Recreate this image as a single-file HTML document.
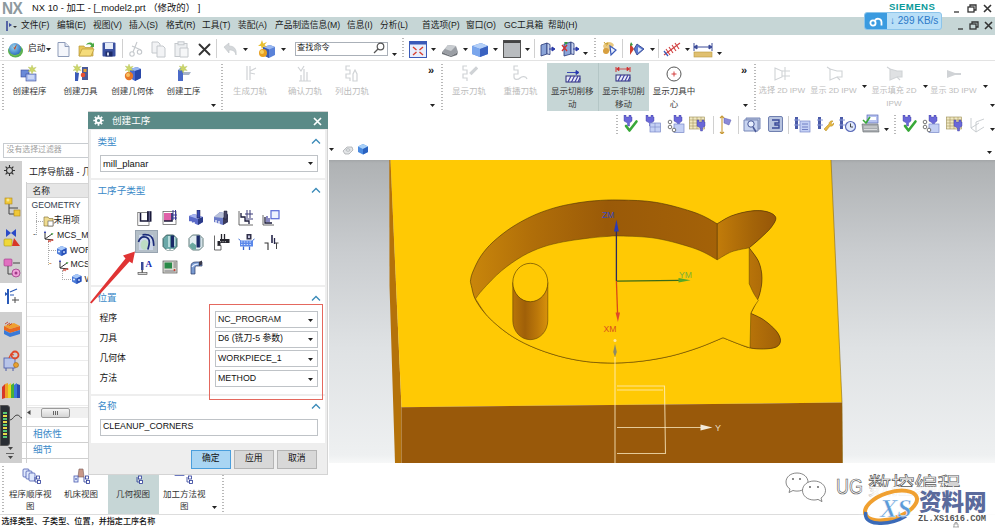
<!DOCTYPE html>
<html lang="zh"><head><meta charset="utf-8"><title>NX 10 - 加工</title>
<style>
*{box-sizing:border-box;margin:0;padding:0}
html,body{width:995px;height:531px;overflow:hidden;background:#fff}
body{font-family:"Liberation Sans","Noto Sans CJK SC",sans-serif;font-size:8.8px;color:#222;position:relative;line-height:1}
.abs{position:absolute}
.t{position:absolute;white-space:nowrap}
.grip{width:2px;background-image:repeating-linear-gradient(#b8b8b8 0 1px,transparent 1px 3px)}
#title{left:0;top:0;width:995px;height:17px;background:#fff}
#menu{left:0;top:17px;width:995px;height:18px;background:#c6d6d6}
#menu .t{top:4px;font-size:8.7px;color:#1a1a1a}
#tb1{left:0;top:35px;width:995px;height:26px;background:#fff;border-bottom:1px solid #e3e3e3}
#ribbon{left:0;top:61px;width:995px;height:52px;background:#fff;border-bottom:1px solid #e3e3e3}
#ribbon .t{font-size:8.7px}
#ribbon .dis{color:#b9b9b9}
#tb2{left:0;top:112px;width:995px;height:26px;background:#fff}
#filter{left:0;top:138px;width:995px;height:22px;background:#fff}
#leftbar{left:0;top:161px;width:22px;height:302px;background:#cfcfcf}
#nav{left:22px;top:161px;width:70px;height:302px;background:#fff;overflow:hidden}
#viewport{left:328.500px;top:160px;width:666.500px;height:304px;background:linear-gradient(#a3a6a8 0,#afb2b4 1%,#c9cccf 30%,#dfe2e4 62%,#eef0f1 97%,#f8f9f9 100%)}
#bottom{left:0;top:463px;width:995px;height:52px;background:#fff;border-bottom:1px solid #ddd}
#status{left:0;top:515px;width:995px;height:16px;background:#fff}
#dialog{left:88px;top:111px;width:240px;height:364px;background:#eeeeee;border:1px solid #d4d4d4}

</style></head><body>
<div id="title" class="abs">
<div class="t" style="left:2px;top:0px;font-size:16.5px;font-weight:bold;color:#8d999e;letter-spacing:-0.5px;transform:scaleX(0.93);transform-origin:0 0">NX</div>
<div class="t" style="left:32px;top:3px;font-size:9.400px;color:#111">NX 10 - 加工 - [_model2.prt （修改的） ]</div>
<div class="t" style="left:889px;top:2px;font-size:9.600px;font-weight:bold;color:#0a9a9a;letter-spacing:0.450px">SIEMENS</div>
<svg class="abs" style="left:950px;top:2px" width="45" height="14" viewBox="0 0 45 14"><g fill="none" stroke="#333" stroke-width="1.3"><path d="M4 10h5"/><rect x="18" y="5" width="6" height="5"/><path d="M20 5V3h6v5h-2"/><path d="M34 3l7 7M41 3l-7 7" stroke-width="1.6"/></g></svg>
</div>
<div id="menu" class="abs">
<svg class="abs" style="left:4px;top:3px" width="14" height="12" viewBox="0 0 14 12"><path d="M3 1v10" stroke="#3a4a9a" stroke-width="1.6"/><path d="M5 3l3 2-3 2z" fill="#3a4a9a"/><path d="M9 6l2 2 2-2z" fill="#333"/></svg>
<div class="t" style="left:21px;top:4px;">文件(F)</div>
<div class="t" style="left:57px;top:4px;">编辑(E)</div>
<div class="t" style="left:93px;top:4px;">视图(V)</div>
<div class="t" style="left:129px;top:4px;">插入(S)</div>
<div class="t" style="left:166px;top:4px;">格式(R)</div>
<div class="t" style="left:202px;top:4px;">工具(T)</div>
<div class="t" style="left:238px;top:4px;">装配(A)</div>
<div class="t" style="left:275px;top:4px;">产品制造信息(M)</div>
<div class="t" style="left:347px;top:4px;">信息(I)</div>
<div class="t" style="left:380px;top:4px;">分析(L)</div>
<div class="t" style="left:422px;top:4px;">首选项(P)</div>
<div class="t" style="left:466px;top:4px;">窗口(O)</div>
<div class="t" style="left:504px;top:4px;">GC工具箱</div>
<div class="t" style="left:548px;top:4px;">帮助(H)</div>
<svg class="abs" style="left:950px;top:2px" width="45" height="14" viewBox="0 0 45 14"><g fill="none" stroke="#333" stroke-width="1.3"><path d="M8 10h5"/><rect x="20" y="5" width="6" height="5"/><path d="M22 5V3h6v5h-2"/><path d="M35 3l7 7M42 3l-7 7" stroke-width="1.6"/></g></svg>
<div class="abs" style="left:864px;top:-5px;width:78px;height:18px;border-radius:3px;background:#b9dff7;border:1px solid #8cc4ea;overflow:hidden">
<div class="abs" style="left:0;top:0;width:22px;height:18px;background:#3b9be0"></div>
<svg class="abs" style="left:3px;top:2px" width="16" height="13" viewBox="0 0 16 13"><g fill="none" stroke="#fff" stroke-width="1.8"><circle cx="5" cy="8" r="2.6"/><path d="M7 5.5a3.5 3.5 0 0 1 6.5 1.5v3.5"/></g></svg>
<div class="t" style="left:25px;top:3px;font-size:10px;color:#2a78c8">&#8595; 299 KB/s</div>
</div>
</div>
<div id="tb1" class="abs">
<div class="abs grip" style="left:2px;top:3px;height:21px"></div>
<svg class="abs" style="left:7px;top:6px" width="17" height="17" viewBox="0 0 17 17"><defs><radialGradient id="gl" cx="0.4" cy="0.35" r="0.7"><stop offset="0" stop-color="#9ad8f0"/><stop offset="1" stop-color="#2a6ac0"/></radialGradient></defs><ellipse cx="8.5" cy="10" rx="7.5" ry="6.5" fill="#5ab050"/><circle cx="8" cy="8" r="6" fill="url(#gl)"/><path d="M4 3l3 4 3-4-2 6z" fill="#c04a28"/><path d="M3 12c3 3 9 3 12-2-2 5-9 7-12 2z" fill="#7cc060"/></svg>
<div class="t" style="left:28px;top:8.5px;font-size:8.7px">启动</div>
<svg class="abs" style="left:45.5px;top:13px" width="5" height="3" viewBox="0 0 5 3"><path d="M0 0h5L2.5 3z" fill="#222"/></svg>
<svg class="abs" style="left:57px;top:7px" width="13" height="15" viewBox="0 0 13 15"><path d="M1 .5h7l4 4v10H1z" fill="#f4f6fb" stroke="#8d9bb8"/><path d="M8 .5v4h4" fill="#dfe5f2" stroke="#8d9bb8"/></svg>
<svg class="abs" style="left:78px;top:6px" width="17" height="16" viewBox="0 0 17 16"><path d="M1 5h5l1 1.5h8V15H1z" fill="#e8c75a" stroke="#b89a3a" stroke-width=".7"/><path d="M1 15l3-7h12l-3 7z" fill="#f5dc7a" stroke="#b89a3a" stroke-width=".7"/><path d="M8 4c2-3 5-3 7-1l1-1.5V6h-4l1.3-1.3C12 3 10 3 8 4z" fill="#4aa844"/></svg>
<svg class="abs" style="left:102px;top:7px" width="14" height="15" viewBox="0 0 14 15"><rect x=".5" y=".5" width="13" height="14" rx="1" fill="#3a50a0"/><rect x="3" y="1" width="8" height="6" fill="#e6ecf8"/><rect x="3.5" y="9.5" width="7" height="5" fill="#1e2c68"/><rect x="5" y="10.5" width="2" height="3" fill="#d0d8f0"/></svg>
<div class="abs" style="left:122px;top:4px;width:1px;height:19px;background:#d0d0d0"></div>
<svg class="abs" style="left:128px;top:6px" width="15" height="17" viewBox="0 0 15 17"><g fill="none" stroke="#c4c8cc" stroke-width="1.1"><path d="M9 1L5 11M4 5l9 4"/><circle cx="4" cy="13" r="2.2"/><circle cx="11.5" cy="11" r="2.2"/></g></svg>
<svg class="abs" style="left:151px;top:6px" width="15" height="17" viewBox="0 0 15 17"><g fill="#f2f3f5" stroke="#c4c8cc" stroke-width="1"><path d="M1 1h6l2 2v9H1z"/><path d="M6 5h6l2 2v9H6z"/></g></svg>
<svg class="abs" style="left:174px;top:6px" width="15" height="17" viewBox="0 0 15 17"><g fill="#eef0f2" stroke="#c4c8cc" stroke-width="1"><rect x="1" y="2.5" width="12" height="13"/><rect x="4" y=".8" width="6" height="3"/><path d="M6 7h8v9H6z" fill="#f6f7f8"/></g></svg>
<svg class="abs" style="left:198px;top:8px" width="13" height="13" viewBox="0 0 13 13"><path d="M1.5 1.5l10 10M11.5 1.5l-10 10" stroke="#333" stroke-width="1.9" stroke-linecap="round"/></svg>
<div class="abs" style="left:216px;top:4px;width:1px;height:19px;background:#d0d0d0"></div>
<svg class="abs" style="left:223px;top:7px" width="15" height="14" viewBox="0 0 15 14"><path d="M1 5l5-4v3c5 0 8 3 7 9-1-4-3-5-7-5v3z" fill="#d4d7da" stroke="#c0c4c8" stroke-width=".6"/></svg>
<svg class="abs" style="left:242.5px;top:13px" width="5" height="3" viewBox="0 0 5 3"><path d="M0 0h5L2.5 3z" fill="#222"/></svg>
<svg class="abs" style="left:257px;top:5px" width="19" height="19" viewBox="0 0 19 19"><path d="M6 7l7-2 5 2v8l-6 3-6-3z" fill="#5a82d8"/><path d="M6 7l6 2.5 6-2.5-5-2z" fill="#9ab8f0"/><path d="M12 9.5V18l-6-3V7z" fill="#3a5cb0"/><circle cx="6" cy="13" r="4" fill="#e8a020"/><circle cx="5" cy="12" r="2" fill="#f8d060"/><path d="M5 0l1.2 3.5L10 2 7.5 5 10 7 6.5 6.5 5 9 4 6 1 6l2.5-2z" fill="#e8c030"/></svg>
<svg class="abs" style="left:280.5px;top:13px" width="5" height="3" viewBox="0 0 5 3"><path d="M0 0h5L2.5 3z" fill="#222"/></svg>
<div class="abs" style="left:294.5px;top:6.5px;width:93px;height:14px;border:1px solid #aab0b8;background:#fff"></div><div class="t" style="left:297px;top:9px;font-size:8.200px;color:#222">查找命令</div>
<svg class="abs" style="left:373px;top:7px" width="12" height="12" viewBox="0 0 12 12"><g fill="none" stroke="#555" stroke-width="1.2"><circle cx="7.5" cy="4.5" r="3.3"/><path d="M5 7L1 11"/></g></svg>
<svg class="abs" style="left:391.5px;top:17.5px" width="5" height="3" viewBox="0 0 5 3"><path d="M0 0h5L2.5 3z" fill="#222"/></svg>
<div class="abs grip" style="left:402px;top:3px;height:21px"></div>
<svg class="abs" style="left:409px;top:6px" width="18" height="17" viewBox="0 0 18 17"><rect x=".5" y=".5" width="17" height="16" fill="#e8eefc" stroke="#3a5ab8"/><rect x=".5" y=".5" width="17" height="3" fill="#3a5ab8"/><g stroke="#d84030" stroke-width="1.4"><path d="M4 6l3.5 3M14 6l-3.5 3M4 14l3.5-3M14 14l-3.5-3"/></g></svg>
<svg class="abs" style="left:431px;top:13px" width="5" height="3" viewBox="0 0 5 3"><path d="M0 0h5L2.5 3z" fill="#222"/></svg>
<svg class="abs" style="left:441px;top:7px" width="18" height="15" viewBox="0 0 18 15"><path d="M1 10l6-7 8 1 2 6-7 4z" fill="#9a9ea4"/><path d="M1 10l9 4 7-4-1 3-6 2-9-3z" fill="#6e7278"/><path d="M7 3l8 1-5 5-6-2z" fill="#c8ccd0"/></svg>
<svg class="abs" style="left:462.5px;top:13px" width="5" height="3" viewBox="0 0 5 3"><path d="M0 0h5L2.5 3z" fill="#222"/></svg>
<svg class="abs" style="left:471px;top:6px" width="18" height="17" viewBox="0 0 18 17"><path d="M1 5l9-3 7 3v8l-8 3-8-3z" fill="#5a8ae0"/><path d="M1 5l8 3 8-3-7-3z" fill="#b4d0f8"/><path d="M9 8v8l-8-3V5z" fill="#7aa6ec"/><path d="M9 8v8l8-3V5z" fill="#3a62c0"/></svg>
<svg class="abs" style="left:492.5px;top:13px" width="5" height="3" viewBox="0 0 5 3"><path d="M0 0h5L2.5 3z" fill="#222"/></svg>
<svg class="abs" style="left:502.5px;top:5px" width="18" height="18" viewBox="0 0 18 18"><rect x=".5" y=".5" width="17" height="17" fill="#b9bcbf" stroke="#555"/><rect x=".5" y=".5" width="17" height="2.5" fill="#444"/></svg>
<svg class="abs" style="left:525px;top:13px" width="5" height="3" viewBox="0 0 5 3"><path d="M0 0h5L2.5 3z" fill="#222"/></svg>
<div class="abs" style="left:534px;top:4px;width:1px;height:19px;background:#d0d0d0"></div>
<svg class="abs" style="left:540px;top:6px" width="16" height="16" viewBox="0 0 16 16"><path d="M1 4l6-2v11l-6 2z" fill="#8aa4d8" stroke="#2a3a78" stroke-width=".8"/><path d="M7 2l3 1.5v10L7 13z" fill="#c8d4f0" stroke="#2a3a78" stroke-width=".8"/><path d="M9 8h5M12 6l3 2-3 2z" stroke="#2a3aa8" fill="#2a3aa8"/></svg>
<svg class="abs" style="left:560px;top:5px" width="20" height="18" viewBox="0 0 20 18"><path d="M4 4l7-2v12l-7 2z" fill="#8aa4d8" stroke="#2a3a78" stroke-width=".8"/><path d="M11 2l3 1.5v11L11 14z" fill="#c8d4f0" stroke="#2a3a78" stroke-width=".8"/><path d="M2 5l5 6M7 5l-5 6" stroke="#d03030" stroke-width="1.4"/><path d="M4 2l2 3 2-3z" fill="#30a040"/><path d="M13 9h4M16 7l3 2-3 2z" stroke="#2a3aa8" fill="#2a3aa8"/></svg>
<svg class="abs" style="left:583px;top:16.5px" width="5" height="3" viewBox="0 0 5 3"><path d="M0 0h5L2.5 3z" fill="#222"/></svg>
<div class="abs grip" style="left:594px;top:3px;height:21px"></div>
<svg class="abs" style="left:600px;top:5px" width="19" height="19" viewBox="0 0 19 19"><path d="M3 6c2-5 9-5 11-1l-3 5-5 4z" fill="#e8c880"/><circle cx="6" cy="11" r="3" fill="#d8a040"/><path d="M10 6l6 4-5 5z" fill="#e8eefc" stroke="#3a5ab8" stroke-width="1.2"/><path d="M4 2l1.5 2L8 3 6.5 5.5" stroke="#c8a030" fill="none"/></svg>
<div class="abs" style="left:622px;top:4px;width:1px;height:19px;background:#d0d0d0"></div>
<svg class="abs" style="left:628px;top:6px" width="20" height="16" viewBox="0 0 20 16"><path d="M2 2l4 6-4 6z" fill="#d04030"/><path d="M3 1l2 3-3 1z" fill="#30a040"/><path d="M9 3l7 5-7 6-3-6z" fill="#5a7ad0" stroke="#2a3a88" stroke-width=".8"/><path d="M10 6l4 2.5-4 3z" fill="#dfe8fc"/></svg>
<svg class="abs" style="left:649.5px;top:13px" width="5" height="3" viewBox="0 0 5 3"><path d="M0 0h5L2.5 3z" fill="#222"/></svg>
<div class="abs" style="left:658px;top:4px;width:1px;height:19px;background:#d0d0d0"></div>
<svg class="abs" style="left:663px;top:5px" width="19" height="19" viewBox="0 0 19 19"><g stroke="#d04040" stroke-width="1.1"><path d="M1 15L17 3"/><path d="M3 9l4 6M6 7l4 6M9 5l4 6M12 3l4 6"/></g><path d="M1 11l4 5" stroke="#3a5ab8" stroke-width="1.3"/></svg>
<svg class="abs" style="left:684.5px;top:13px" width="5" height="3" viewBox="0 0 5 3"><path d="M0 0h5L2.5 3z" fill="#222"/></svg>
<svg class="abs" style="left:693px;top:7px" width="20" height="16" viewBox="0 0 20 16"><g stroke="#3a4a98" stroke-width="1"><path d="M1 1v8M19 1v8M1 5h18"/><path d="M1 5l3-2v4zM19 5l-3-2v4z" fill="#3a4a98"/></g><rect x="1" y="10" width="18" height="5" fill="#e0c070" stroke="#b89840" stroke-width=".6"/></svg>
<svg class="abs" style="left:716.5px;top:16.5px" width="5" height="3" viewBox="0 0 5 3"><path d="M0 0h5L2.5 3z" fill="#222"/></svg>
</div>
<div id="ribbon" class="abs">
<div class="abs grip" style="left:2px;top:3px;height:46px"></div>
<svg class="abs" style="left:20px;top:4px" width="18" height="17" viewBox="0 0 18 17"><rect x="1" y="5" width="8" height="7" fill="#6a8ad8" stroke="#3a4a98" stroke-width=".6"/><rect x="6" y="9" width="10" height="7" fill="#a8bcf0" stroke="#3a4a98" stroke-width=".6"/><path d="M8 11h6M8 13h6" stroke="#fff" stroke-width=".8"/><path d="M12 0l1.2 3 3-.8-2 2.4 2 2-3-.4-1.2 2.8-1-2.8-3 .2 2.2-2-2-2.4 2.8.8z" fill="#ccd668" stroke="#a8b848" stroke-width=".3"/></svg>
<div class="t" style="left:29.5px;top:26px;width:80px;margin-left:-40px;text-align:center;color:#3a3a3a;font-size:8.500px">创建程序</div>
<svg class="abs" style="left:72px;top:3px" width="18" height="18" viewBox="0 0 18 18"><rect x="10" y="3" width="6" height="13" fill="#4a5a98"/><rect x="11.5" y="5" width="3" height="3" fill="#e8a030"/><path d="M3 8l4 1-1 8H3z" fill="#3a5ab8"/><circle cx="11" cy="11" r="2.3" fill="#e85030"/><path d="M5 0l1.2 3 3-.8-2 2.4 2 2-3-.4-1.2 2.8-1-2.8-3 .2 2.2-2-2-2.4 2.8.8z" fill="#ccd668" stroke="#a8b848" stroke-width=".3"/></svg>
<div class="t" style="left:80.5px;top:26px;width:80px;margin-left:-40px;text-align:center;color:#3a3a3a;font-size:8.500px">创建刀具</div>
<svg class="abs" style="left:123px;top:3px" width="19" height="18" viewBox="0 0 19 18"><path d="M7 5l7-2 4 2v9l-6 3-5-3z" fill="#4a6ad0"/><path d="M7 5l5 2 6-2-4-2z" fill="#9ab8f0"/><path d="M12 7v10l6-3V5z" fill="#2a48a8"/><circle cx="6" cy="12" r="4.2" fill="#e87828"/><circle cx="5" cy="11" r="2" fill="#f8c060"/><path d="M6 0l1.2 3 3-.8-2 2.4 2 2-3-.4-1.2 2.8-1-2.8-3 .2 2.2-2-2-2.4 2.8.8z" fill="#ccd668" stroke="#a8b848" stroke-width=".3"/></svg>
<div class="t" style="left:132.5px;top:26px;width:80px;margin-left:-40px;text-align:center;color:#3a3a3a;font-size:8.500px">创建几何体</div>
<svg class="abs" style="left:175px;top:3px" width="18" height="18" viewBox="0 0 18 18"><rect x="3" y="6" width="5" height="11" fill="#4a6ac8"/><path d="M8 8h8l-2 3H8z" fill="#a8b4c8"/><path d="M3 6l2-2h3v2z" fill="#8aa4e0"/><path d="M8 0l1.2 3 3-.8-2 2.4 2 2-3-.4-1.2 2.8-1-2.8-3 .2 2.2-2-2-2.4 2.8.8z" fill="#ccd668" stroke="#a8b848" stroke-width=".3"/></svg>
<div class="t" style="left:183.5px;top:26px;width:80px;margin-left:-40px;text-align:center;color:#3a3a3a;font-size:8.500px">创建工序</div>
<svg class="abs" style="left:211px;top:42.5px" width="5" height="3" viewBox="0 0 5 3"><path d="M0 0h5L2.5 3z" fill="#222"/></svg>
<div class="abs grip" style="left:221px;top:3px;height:46px"></div>
<svg class="abs" style="left:243px;top:4px" width="15" height="17" viewBox="0 0 15 17"><g stroke="#d0d3d6" fill="none" stroke-width="1.2"><path d="M4 1v14M7 1v14"/><path d="M7 6l6-3M7 8l5 1"/></g></svg>
<div class="t" style="left:250px;top:26px;width:80px;margin-left:-40px;text-align:center;color:#bcbcbc;font-size:8.500px">生成刀轨</div>
<svg class="abs" style="left:296px;top:4px" width="18" height="17" viewBox="0 0 18 17"><g stroke="#d0d3d6" fill="none" stroke-width="1.2"><path d="M2 2l3 4 3-5"/><path d="M8 4v12M11 7v9M5 10v6M3 16h12"/></g></svg>
<div class="t" style="left:305px;top:26px;width:80px;margin-left:-40px;text-align:center;color:#bcbcbc;font-size:8.500px">确认刀轨</div>
<svg class="abs" style="left:344px;top:4px" width="17" height="17" viewBox="0 0 17 17"><g stroke="#d0d3d6" fill="none" stroke-width="1.2"><path d="M6 1H2v4h4v4H2v4h4v3"/><path d="M9 16V9l2-4 2 4v7z"/></g></svg>
<div class="t" style="left:352px;top:26px;width:80px;margin-left:-40px;text-align:center;color:#bcbcbc;font-size:8.500px">列出刀轨</div>
<div class="t" style="left:428px;top:4px;font-size:11px;font-weight:bold;color:#222">»</div>
<svg class="abs" style="left:429.5px;top:42.5px" width="5" height="3" viewBox="0 0 5 3"><path d="M0 0h5L2.5 3z" fill="#222"/></svg>
<div class="abs grip" style="left:441px;top:3px;height:46px"></div>
<svg class="abs" style="left:461px;top:4px" width="17" height="17" viewBox="0 0 17 17"><g stroke="#d0d3d6" fill="none" stroke-width="1.2"><path d="M6 1H2v4h4v4H2v4h4v3"/><path d="M9 8l6-6 1.5 1.5-6 6z" fill="#d0d3d6"/></g></svg>
<div class="t" style="left:469px;top:26px;width:80px;margin-left:-40px;text-align:center;color:#bcbcbc;font-size:8.500px">显示刀轨</div>
<svg class="abs" style="left:512px;top:4px" width="17" height="17" viewBox="0 0 17 17"><g stroke="#d0d3d6" fill="none" stroke-width="1.2"><path d="M6 1H2v4h4v4H2v3c0 3 4 3 6 1s6-2 7 1"/></g></svg>
<div class="t" style="left:520.5px;top:26px;width:80px;margin-left:-40px;text-align:center;color:#bcbcbc;font-size:8.500px">重播刀轨</div>
<div class="abs" style="left:546.5px;top:2px;width:102.5px;height:48px;background:#c6d6d6"></div><div class="abs" style="left:598px;top:2px;width:1px;height:48px;background:#b4c6c6"></div>
<svg class="abs" style="left:565px;top:9px" width="16" height="13" viewBox="0 0 16 13"><path d="M2 2.5h11M11 .5l3 2-3 2z" stroke="#2a3ab0" fill="#2a3ab0" stroke-width=".9"/><rect x="1" y="6" width="14" height="6" fill="#e8eaf8" stroke="#2a2a78" stroke-width="1"/><path d="M3 12l3-6M6.5 12l3-6M10 12l3-6M13 12l2-4" stroke="#3a3aa0" stroke-width="1.1"/></svg>
<div class="t" style="left:572.3px;top:26px;width:80px;margin-left:-40px;text-align:center;color:#3a3a3a;font-size:8.500px">显示切削移</div>
<div class="t" style="left:572.3px;top:38.5px;width:80px;margin-left:-40px;text-align:center;color:#3a3a3a;font-size:8.500px">动</div>
<svg class="abs" style="left:615px;top:5px" width="16" height="17" viewBox="0 0 16 17"><path d="M1 1v5M15 1v5" stroke="#d03030" stroke-width="1"/><path d="M2 3h12M4 1.2L1.5 3 4 4.8zM12 1.2L14.5 3 12 4.8z" stroke="#d03030" fill="#d03030" stroke-width=".8"/><rect x="1" y="9" width="14" height="6" fill="#e8eaf8" stroke="#2a2a78" stroke-width="1"/><path d="M3 15l3-6M6.5 15l3-6M10 15l3-6M13 15l2-4" stroke="#3a3aa0" stroke-width="1.1"/></svg>
<div class="t" style="left:623.5px;top:26px;width:80px;margin-left:-40px;text-align:center;color:#3a3a3a;font-size:8.500px">显示非切削</div>
<div class="t" style="left:623.5px;top:38.5px;width:80px;margin-left:-40px;text-align:center;color:#3a3a3a;font-size:8.500px">移动</div>
<svg class="abs" style="left:666px;top:5px" width="16" height="16" viewBox="0 0 16 16"><circle cx="8" cy="8" r="7" fill="#fff" stroke="#444" stroke-width=".9"/><path d="M8 5.5v5M5.5 8h5" stroke="#d03030" stroke-width=".9"/></svg>
<div class="t" style="left:674px;top:26px;width:80px;margin-left:-40px;text-align:center;color:#3a3a3a;font-size:8.500px">显示刀具中</div>
<div class="t" style="left:674px;top:38.5px;width:80px;margin-left:-40px;text-align:center;color:#3a3a3a;font-size:8.500px">心</div>
<div class="t" style="left:741px;top:4px;font-size:11px;font-weight:bold;color:#222">»</div>
<svg class="abs" style="left:742.5px;top:42.5px" width="5" height="3" viewBox="0 0 5 3"><path d="M0 0h5L2.5 3z" fill="#222"/></svg>
<div class="abs grip" style="left:754px;top:3px;height:46px"></div>
<svg class="abs" style="left:774px;top:5px" width="18" height="15" viewBox="0 0 18 15"><g stroke="#d0d3d6" fill="none" stroke-width="1.1"><path d="M1 2l7 3v6l-7 3z"/><path d="M11 1v13M8 5h8M8 10h8"/></g></svg>
<div class="t" style="left:782px;top:26px;width:80px;margin-left:-40px;text-align:center;color:#bcbcbc;font-size:8.100px">选择 2D IPW</div>
<svg class="abs" style="left:826px;top:5px" width="18" height="15" viewBox="0 0 18 15"><g stroke="#d0d3d6" fill="none" stroke-width="1.1"><path d="M4 3l7 2h5v6h-5l-7 3z"/><path d="M1 1l3 2M11 11l3 3"/></g></svg>
<div class="t" style="left:833.5px;top:26px;width:80px;margin-left:-40px;text-align:center;color:#bcbcbc;font-size:8.100px">显示 2D IPW</div>
<svg class="abs" style="left:861.5px;top:24px" width="5" height="3" viewBox="0 0 5 3"><path d="M0 0h5L2.5 3z" fill="#222"/></svg>
<svg class="abs" style="left:886px;top:5px" width="18" height="15" viewBox="0 0 18 15"><g stroke="#d0d3d6" fill="#dfe1e3" stroke-width="1.1"><path d="M4 3l7 2h5v6h-5l-7 3z"/><path d="M1 1l3 2M11 11l3 3" fill="none"/></g></svg>
<div class="t" style="left:894px;top:26px;width:80px;margin-left:-40px;text-align:center;color:#bcbcbc;font-size:8.100px">显示填充 2D</div>
<div class="t" style="left:894px;top:38.5px;width:80px;margin-left:-40px;text-align:center;color:#bcbcbc;font-size:8.100px">IPW</div>
<svg class="abs" style="left:922.5px;top:24px" width="5" height="3" viewBox="0 0 5 3"><path d="M0 0h5L2.5 3z" fill="#222"/></svg>
<svg class="abs" style="left:946px;top:6px" width="16" height="13" viewBox="0 0 16 13"><path d="M1 3l8 3h6v2H9l-8 3z" fill="#d0d3d6"/></svg>
<div class="t" style="left:953.5px;top:26px;width:80px;margin-left:-40px;text-align:center;color:#bcbcbc;font-size:8.100px">显示 3D IPW</div>
<svg class="abs" style="left:982.5px;top:24px" width="5" height="3" viewBox="0 0 5 3"><path d="M0 0h5L2.5 3z" fill="#222"/></svg>
<svg class="abs" style="left:989.5px;top:42.5px" width="5" height="3" viewBox="0 0 5 3"><path d="M0 0h5L2.5 3z" fill="#222"/></svg>
</div>
<div id="tb2" class="abs">
<div class="abs grip" style="left:616px;top:3px;height:20px"></div>
<svg class="abs" style="left:621px;top:3px" width="18" height="18" viewBox="0 0 18 18"><path d="M3 0h2v2h3v-2h2v2h1v4l-2.5 2v3h-2v-3L3 6v-4z" fill="#6a68d8" stroke="#3a3aa0" stroke-width=".4"/><path d="M5 11l3.5 4.5 7-9" fill="none" stroke="#38a838" stroke-width="2.6" stroke-linecap="round" stroke-linejoin="round"/></svg>
<svg class="abs" style="left:645px;top:3px" width="17" height="18" viewBox="0 0 17 18"><path d="M1 0h2v2h3v-2h2v2h1v4l-2.5 2v3h-2v-3L1 6v-4z" fill="#6a68d8" stroke="#3a3aa0" stroke-width=".4"/><rect x="5" y="8" width="10.5" height="9" fill="#c4d0f4" stroke="#7888c8" stroke-width=".7"/><path d="M5 12h10.5M10 8v9" stroke="#7888c8" stroke-width=".6"/></svg>
<svg class="abs" style="left:667px;top:3px" width="18" height="18" viewBox="0 0 18 18"><path d="M7 0h2v2h3v-2h2v2h1v4l-2.5 2v3h-2v-3L7 6v-4z" fill="#6a68d8" stroke="#3a3aa0" stroke-width=".4"/><rect x="7" y="9" width="10" height="8.5" fill="#c4d0f4" stroke="#7888c8" stroke-width=".7"/><g fill="#fff" stroke="#555" stroke-width=".8"><circle cx="3" cy="7" r="1.8"/><circle cx="3" cy="12" r="1.8"/><circle cx="7" cy="15" r="1.8"/></g></svg>
<svg class="abs" style="left:689px;top:3px" width="18" height="19" viewBox="0 0 18 19"><rect x=".5" y="2" width="15" height="12" fill="#f0e8c0" stroke="#9a8a50" stroke-width=".6"/><path d="M.5 5h15M.5 8h15M.5 11h15M4 2v12M8 2v12M12 2v12" stroke="#9a8a50" stroke-width=".5"/><path d="M8 5h2v2h3v-2h2v2h1v4l-2.5 2v3h-2v-3L8 11v-4z" fill="#6a68d8" stroke="#3a3aa0" stroke-width=".4"/></svg>
<div class="abs" style="left:712.5px;top:4px;width:1px;height:18px;background:#d0d0d0"></div>
<svg class="abs" style="left:719px;top:3px" width="15" height="19" viewBox="0 0 15 19"><path d="M3 2v16M1 3l2-2 2 2M1 17l2 2 2-2" stroke="#c89a38" stroke-width="1.1" fill="none"/><path d="M5 3l7 2-2 5-5-2z" fill="#8a8ad8" stroke="#5a5ab0" stroke-width=".5"/></svg>
<div class="abs" style="left:737.5px;top:4px;width:1px;height:18px;background:#d0d0d0"></div>
<svg class="abs" style="left:742.5px;top:3px" width="19" height="18" viewBox="0 0 19 18"><path d="M3 3h14v11H3z" fill="#b0bcd8" stroke="#7888b8"/><path d="M1 5h14v11H1z" fill="#c8d4f0" stroke="#7888b8"/><circle cx="8" cy="9" r="3.2" fill="#e8f0ff" stroke="#4a5a98"/><path d="M10 12l3 5" stroke="#4a5a98" stroke-width="1.6"/></svg>
<svg class="abs" style="left:767.5px;top:4px" width="15" height="16" viewBox="0 0 15 16"><rect x=".5" y=".5" width="14" height="15" rx="1.5" fill="#b8c4e0" stroke="#7080b0"/><path d="M4 4h7v3H7v2h4v3H4" fill="none" stroke="#3a4a98" stroke-width="1.4"/></svg>
<div class="abs" style="left:788px;top:4px;width:1px;height:18px;background:#d0d0d0"></div>
<svg class="abs" style="left:794px;top:4px" width="17" height="17" viewBox="0 0 17 17"><rect x="1" y="1" width="3" height="12" fill="#4a5aa8"/><path d="M0 4h6M0 9h6" stroke="#8a9ad8" stroke-width="1"/><rect x="6" y="5" width="10" height="11" fill="#c4d0f4" stroke="#7888c8" stroke-width=".7"/><path d="M8 8h6M8 11h6M8 13.5h6" stroke="#5a6ab8" stroke-width=".8"/></svg>
<svg class="abs" style="left:817px;top:4px" width="17" height="17" viewBox="0 0 17 17"><rect x="1" y="1" width="3" height="12" fill="#4a5aa8"/><path d="M0 4h6M0 9h6" stroke="#8a9ad8" stroke-width="1"/><path d="M7 13l5-5a3 3 0 0 1 4-3l-2 2 1 1.5 2-1.500a3 3 0 0 1-4 3l-4 5z" fill="#e8b840" stroke="#b08820" stroke-width=".5"/></svg>
<svg class="abs" style="left:839px;top:4px" width="18" height="17" viewBox="0 0 18 17"><rect x="1" y="1" width="3" height="12" fill="#4a5aa8"/><path d="M0 4h6M0 9h6" stroke="#8a9ad8" stroke-width="1"/><circle cx="11.5" cy="10.500" r="5" fill="#dfe8fc" stroke="#5a6ab8" stroke-width="1.2"/><path d="M11.5 7.500v3.500h2.500" stroke="#333" fill="none" stroke-width=".9"/></svg>
<svg class="abs" style="left:861px;top:2px" width="19" height="20" viewBox="0 0 19 20"><rect x="6" y="1" width="11" height="8" fill="#b8c4f0" stroke="#5a6ab8" stroke-width=".7"/><rect x="8" y="3" width="7" height="3" fill="#fff"/><path d="M1 10h16l1 8H2z" fill="#a8acb0" stroke="#6a6e72" stroke-width=".6"/><path d="M3 13h13M3 15.500h13" stroke="#e8e8e8" stroke-width=".8"/><path d="M2 6l3 3 4-6" fill="none" stroke="#38a838" stroke-width="1.6"/></svg>
<svg class="abs" style="left:883.5px;top:16px" width="5" height="3" viewBox="0 0 5 3"><path d="M0 0h5L2.5 3z" fill="#222"/></svg>
<div class="abs grip" style="left:894px;top:3px;height:20px"></div>
<svg class="abs" style="left:900px;top:3px" width="18" height="18" viewBox="0 0 18 18"><path d="M3 0h2v2h3v-2h2v2h1v4l-2.5 2v3h-2v-3L3 6v-4z" fill="#6a68d8" stroke="#3a3aa0" stroke-width=".4"/><path d="M5 11l3.5 4.5 7-9" fill="none" stroke="#38a838" stroke-width="2.6" stroke-linecap="round" stroke-linejoin="round"/></svg>
<svg class="abs" style="left:922px;top:3px" width="18" height="18" viewBox="0 0 18 18"><path d="M7 0h2v2h3v-2h2v2h1v4l-2.5 2v3h-2v-3L7 6v-4z" fill="#6a68d8" stroke="#3a3aa0" stroke-width=".4"/><rect x="7" y="9" width="10" height="8.5" fill="#c4d0f4" stroke="#7888c8" stroke-width=".7"/><g fill="#fff" stroke="#555" stroke-width=".8"><circle cx="3" cy="7" r="1.8"/><circle cx="3" cy="12" r="1.8"/><circle cx="7" cy="15" r="1.8"/></g></svg>
<svg class="abs" style="left:945.5px;top:3px" width="18" height="19" viewBox="0 0 18 19"><rect x=".5" y="2" width="15" height="12" fill="#f0e8c0" stroke="#9a8a50" stroke-width=".6"/><path d="M.5 5h15M.5 8h15M.5 11h15M4 2v12M8 2v12M12 2v12" stroke="#9a8a50" stroke-width=".5"/><path d="M8 5h2v2h3v-2h2v2h1v4l-2.5 2v3h-2v-3L8 11v-4z" fill="#6a68d8" stroke="#3a3aa0" stroke-width=".4"/></svg>
<svg class="abs" style="left:969px;top:4px" width="16" height="17" viewBox="0 0 16 17"><g stroke="#c4c8cc" fill="none" stroke-width=".9"><path d="M2 2v10l5 4 8-5"/><path d="M2 12l8-5M7 16V6l8-3"/></g></svg>
<svg class="abs" style="left:989.5px;top:16px" width="5" height="3" viewBox="0 0 5 3"><path d="M0 0h5L2.5 3z" fill="#222"/></svg>
</div>
<div id="filter" class="abs">
<div class="abs" style="left:3px;top:4.5px;width:100px;height:15px;border:1px solid #c8ccd0;background:#fff"></div><div class="t" style="left:6.5px;top:7.5px;font-size:7.900px;color:#a0a0a0">没有选择过滤器</div>
<svg class="abs" style="left:328.5px;top:10px" width="5" height="3" viewBox="0 0 5 3"><path d="M0 0h5L2.5 3z" fill="#222"/></svg>
<svg class="abs" style="left:341.5px;top:6.5px" width="12" height="10" viewBox="0 0 12 10"><path d="M1 6l4-4h5l1 3-4 4H3z" fill="#e4e6e8" stroke="#a0a4a8" stroke-width=".7"/><ellipse cx="6" cy="5" rx="2" ry="1.300" fill="none" stroke="#a0a4a8" stroke-width=".6"/></svg>
<svg class="abs" style="left:357px;top:5px" width="12" height="12" viewBox="0 0 12 12"><path d="M1 3.500l5-2.500 5 2.500v5.500l-5 2.500-5-2.500z" fill="#4a8ae0"/><path d="M1 3.500l5 2.500 5-2.500-5-2.500z" fill="#a8d0f8"/><path d="M6 6v5.500l5-2.500V3.500z" fill="#2a62c0"/></svg>
<svg class="abs" style="left:986.5px;top:13px" width="5" height="3" viewBox="0 0 5 3"><path d="M0 0h5L2.5 3z" fill="#222"/></svg>
</div>
<div id="leftbar" class="abs">
<svg class="abs" style="left:4px;top:3.5px" width="11" height="11" viewBox="0 0 11 11"><circle cx="5.500" cy="5.500" r="3" fill="none" stroke="#333" stroke-width="1.100"/><g stroke="#333" stroke-width="1.100"><path d="M5.500 0v2M5.500 9v2M0 5.500h2M9 5.500h2M1.600 1.600l1.400 1.400M8 8l1.400 1.400M1.600 9.400L3 8M8 3l1.400-1.400"/></g></svg>
<svg class="abs" style="left:3px;top:36px" width="18" height="20" viewBox="0 0 18 20"><path d="M6 6v11h9M6 11h9" stroke="#444" fill="none" stroke-width="1"/><rect x="2" y="1" width="7" height="6" fill="#f0c838" stroke="#b08818" stroke-width=".6"/><rect x="11" y="13" width="6" height="6" fill="#f0c838" stroke="#b08818" stroke-width=".6"/><circle cx="5" cy="3" r="1.500" fill="#f8e890"/></svg>
<svg class="abs" style="left:3px;top:67px" width="18" height="20" viewBox="0 0 18 20"><path d="M3 1l5 4-5 4zM13 1L8 5l5 4z" fill="#2a4ac8"/><rect x="1" y="11" width="8" height="7" rx="1" fill="#f0d838" stroke="#a89818" stroke-width=".6"/><path d="M9 18l8 0-6-8z" fill="#d83828"/></svg>
<svg class="abs" style="left:3px;top:97px" width="18" height="21" viewBox="0 0 18 21"><rect x="1" y="1" width="8" height="7" rx="1" fill="#e070c0" stroke="#a03888" stroke-width=".6"/><path d="M10 5h7M5 8v8h4" stroke="#444" fill="none"/><circle cx="13" cy="15" r="4" fill="#f0a0d8" stroke="#a03888" stroke-width=".8"/><circle cx="13" cy="15" r="1.500" fill="#a03888"/></svg>
<div class="abs" style="left:0;top:122px;width:22px;height:29px;background:#fff"></div><svg class="abs" style="left:4px;top:126px" width="17" height="20" viewBox="0 0 17 20"><path d="M4 2v15" stroke="#2a5ab8" stroke-width="2"/><path d="M6 5l7-3M6 8l4 0" stroke="#2a5ab8" stroke-width="1.200"/><path d="M8 13h7M11 10l0 6" stroke="#4a4a4a" stroke-width="1"/><path d="M1 5l3 2-3 2z" fill="#2a5ab8"/></svg>
<svg class="abs" style="left:2px;top:160px" width="19" height="18" viewBox="0 0 19 18"><path d="M2 5l10-3 6 3-10 3z" fill="#f0a030"/><path d="M2 5v4l6 3 10-3V5L8 8z" fill="#e86820"/><path d="M2 9v4l6 3 10-3V9L8 12z" fill="#3a7ad8"/><path d="M3 3l3-2M5 4l3-2M7 4.500l3-2" stroke="#c03020" stroke-width=".8"/></svg>
<svg class="abs" style="left:2px;top:189px" width="19" height="22" viewBox="0 0 19 22"><rect x="2" y="8" width="11" height="10" fill="#b8c4e8" stroke="#4a5aa8" stroke-width=".8"/><path d="M4 18v3M11 18v3" stroke="#4a5aa8"/><circle cx="13" cy="5" r="3.500" fill="none" stroke="#e04828" stroke-width="1.800"/><path d="M7 8l2-4 3 1" fill="none" stroke="#e04828" stroke-width="1.200"/><circle cx="14" cy="15" r="2.500" fill="#e8a030" stroke="#a06810" stroke-width=".6"/></svg>
<svg class="abs" style="left:1px;top:220px" width="20" height="19" viewBox="0 0 20 19"><path d="M1 6l3-3v14l-3 1z" fill="#d83828"/><path d="M4 3l3-1v15H4z" fill="#f0a028"/><path d="M7 4l3-2v15H7z" fill="#e8d828"/><path d="M10 4l3-2v15h-3z" fill="#48b038"/><path d="M13 4l3-2v15h-3z" fill="#3878d8"/><path d="M16 3l3 1v13h-3z" fill="#2a4ab0"/></svg>
<div class="abs" style="left:0;top:244px;width:10px;height:41px;background:#2a2e34;border-radius:0 3px 3px 0;border:1px solid #555"></div><div class="abs" style="left:2.500px;top:251px;width:4px;height:26px;background:repeating-linear-gradient(#58c878 0 2px,#2a2e34 2px 3px,#e8d848 3px 5px,#2a2e34 5px 6px)"></div><svg class="abs" style="left:10px;top:253px" width="12" height="8" viewBox="0 0 12 8"><path d="M0 6c3 0 4-5 7-5s3 3 5 3" fill="none" stroke="#444" stroke-width="1"/></svg>
<svg class="abs" style="left:7.5px;top:285.5px" width="5" height="3" viewBox="0 0 5 3"><path d="M0 0h5L2.5 3z" fill="#444"/></svg>
<svg class="abs" style="left:7.5px;top:294.5px" width="5" height="3" viewBox="0 0 5 3"><path d="M0 0h5L2.5 3z" fill="#444"/></svg>
<div class="abs" style="left:6px;top:292px;width:8px;height:1px;background:#666"></div></div>
<div id="nav" class="abs">
<div class="abs" style="left:4px;top:21px;width:1px;height:281px;background:#cfcfcf"></div><div class="t" style="left:7px;top:6.5px;font-size:8.700px;font-size:9px;color:#222">工序导航器 - 几</div>
<div class="abs" style="left:5px;top:22px;width:65px;height:15px;background:#e6e6e6;border-top:1px solid #d4d4d4;border-bottom:1px solid #d4d4d4"></div><div class="t" style="left:10.5px;top:25.5px;font-size:8.700px;">名称</div>
<div class="t" style="left:9.5px;top:40px;font-size:8.700px;font-size:8.600px;color:#34404e">GEOMETRY</div>
<div class="abs" style="left:14px;top:51px;width:1px;height:23px;border-left:1px dotted #aaa"></div><div class="abs" style="left:14px;top:60px;width:7px;height:1px;border-top:1px dotted #aaa"></div><div class="abs" style="left:26px;top:80px;width:1px;height:24px;border-left:1px dotted #aaa"></div><div class="abs" style="left:26px;top:89px;width:8px;height:1px;border-top:1px dotted #aaa"></div><div class="abs" style="left:40px;top:109px;width:1px;height:10px;border-left:1px dotted #aaa"></div><div class="abs" style="left:40px;top:118px;width:9px;height:1px;border-top:1px dotted #aaa"></div><svg class="abs" style="left:20.5px;top:54px" width="11" height="12" viewBox="0 0 11 12"><path d="M1 2h4l1 1.500h4V11H1z" fill="#f0dc90" stroke="#8a7a40" stroke-width=".7"/><rect x="5" y="6" width="5" height="5" fill="#fff" stroke="#555" stroke-width=".6"/></svg>
<div class="t" style="left:31.5px;top:55px;font-size:8.700px;">未用项</div>
<div class="t" style="left:11px;top:69px;font-size:8.700px;color:#555">-</div>
<svg class="abs" style="left:21px;top:68.5px" width="12" height="13" viewBox="0 0 12 13"><path d="M2 9V2M2 9l7-5M2 9l8 1" stroke="#333" stroke-width="1" fill="none"/><path d="M1 3l1-2.500 1 2.500z" fill="#2a3ab8"/><path d="M8 3l2.500.500-1.500 1.800z" fill="#38a038"/><path d="M8.500 9l2.500 1-2.500 1.200z" fill="#d03828"/><path d="M5 10l3 2M8 10l-3 2" stroke="#d03828" stroke-width=".8"/></svg>
<div class="t" style="left:35px;top:70px;font-size:8.700px;">MCS_MILL</div>
<svg class="abs" style="left:34px;top:83.5px" width="12" height="12" viewBox="0 0 12 12"><path d="M1 3.500l4.500-2.500 5 2v5.500l-5 2.500-4.500-2.500z" fill="#4a7ad8"/><path d="M1 3.500l4.500 2 5-2.500-5-2z" fill="#a8c8f8"/><path d="M5.500 5.500V11l5-2.500V3z" fill="#2a52b8"/><circle cx="3" cy="6.500" r="1" fill="#e8f0ff"/><circle cx="8" cy="7" r="1" fill="#c8d8f8"/></svg>
<div class="t" style="left:48px;top:84.5px;font-size:8.700px;">WORKPIECE</div>
<div class="t" style="left:27px;top:98px;font-size:8.700px;color:#d08030">-</div>
<svg class="abs" style="left:35.5px;top:97.5px" width="12" height="13" viewBox="0 0 12 13"><path d="M2 9V2M2 9l7-5M2 9l8 1" stroke="#333" stroke-width="1" fill="none"/><path d="M1 3l1-2.500 1 2.500z" fill="#2a3ab8"/><path d="M8 3l2.500.500-1.500 1.800z" fill="#38a038"/><path d="M8.500 9l2.500 1-2.500 1.200z" fill="#d03828"/><path d="M5 10l3 2M8 10l-3 2" stroke="#d03828" stroke-width=".8"/></svg>
<div class="t" style="left:48.5px;top:99px;font-size:8.700px;">MCS_1</div>
<svg class="abs" style="left:49px;top:112px" width="12" height="12" viewBox="0 0 12 12"><path d="M1 3.500l4.500-2.500 5 2v5.500l-5 2.500-4.500-2.500z" fill="#4a7ad8"/><path d="M1 3.500l4.500 2 5-2.500-5-2z" fill="#a8c8f8"/><path d="M5.500 5.500V11l5-2.500V3z" fill="#2a52b8"/><circle cx="3" cy="6.500" r="1" fill="#e8f0ff"/><circle cx="8" cy="7" r="1" fill="#c8d8f8"/></svg>
<div class="t" style="left:62.5px;top:113.5px;font-size:8.700px;">WORKPIECE_1</div>
<div class="abs" style="left:5px;top:127px;width:65px;height:118px;background:repeating-linear-gradient(#fff 0 13.700px,#ececec 13.700px 14.700px)"></div><div class="abs" style="left:5px;top:246px;width:65px;height:11px;background:#f0f0f0;border-top:1px solid #e0e0e0"></div><svg class="abs" style="left:5px;top:249px" width="4" height="5" viewBox="0 0 4 5"><path d="M3.500 0L0 2.500 3.500 5z" fill="#444"/></svg>
<div class="abs" style="left:18.5px;top:247px;width:29px;height:10px;background:linear-gradient(#f4f4f4,#d4d4d4);border:1px solid #9a9a9a;border-radius:2px"></div><div class="abs" style="left:30.5px;top:250px;width:5px;height:4px;background:repeating-linear-gradient(90deg,#666 0 1px,transparent 1px 2px)"></div><div class="abs" style="left:0;top:264.5px;width:70px;height:1px;background:#cfcfcf"></div><div class="t" style="left:11px;top:268px;font-size:8.700px;font-size:9.600px;color:#3a8ac8">相依性</div>
<div class="abs" style="left:0;top:280.5px;width:70px;height:1px;background:#cfcfcf"></div><div class="t" style="left:11px;top:284px;font-size:8.700px;font-size:9.600px;color:#3a8ac8">细节</div>
<div class="abs" style="left:0;top:297px;width:70px;height:1px;background:#cfcfcf"></div></div>
<div id="viewport" class="abs"></div>
<svg id="scene" class="abs" style="left:0;top:0" width="995" height="531" viewBox="0 0 995 531">
<defs>
<clipPath id="vp"><rect x="328" y="160" width="667" height="303"/></clipPath>
<clipPath id="oc"><path d="M470.4 281.2C470.7 279.8 470.7 277.0 472.4 272.9C474.1 268.8 477.2 261.5 480.7 256.3C484.2 251.1 488.0 246.6 493.2 241.8C498.4 237.0 505.2 231.6 511.8 227.3C518.4 223.0 525.6 219.1 532.5 215.9C539.4 212.7 546.4 210.3 553.3 208.2C560.2 206.1 567.1 204.7 574.0 203.5C580.9 202.3 587.0 201.4 594.7 200.8C602.4 200.2 609.6 199.7 620.0 200.0C630.4 200.3 644.1 200.3 656.8 202.5C669.5 204.7 685.9 209.4 696.0 213.0C706.1 216.6 713.7 222.0 717.2 223.8C719.6 222.5 726.0 217.9 731.6 215.8C737.2 213.7 744.9 211.7 750.8 211.0C756.6 210.3 762.6 210.5 766.7 211.6C770.9 212.7 774.9 214.8 775.7 217.4C776.5 220.0 774.0 223.5 771.5 227.0C769.0 230.5 764.1 234.7 760.4 238.2C756.7 241.7 751.1 246.2 749.2 247.8C750.8 250.2 756.7 257.0 758.8 262.0C760.9 267.0 761.9 272.7 762.0 278.0C762.1 283.3 761.0 289.2 759.7 294.0C758.4 298.8 755.5 303.8 754.0 307.0C752.5 310.2 751.3 312.2 750.8 313.3C752.9 314.4 759.2 316.8 763.5 319.7C767.8 322.6 773.5 327.5 776.3 331.0C779.1 334.5 780.5 337.8 780.5 340.5C780.5 343.2 779.1 345.6 776.3 347.0C773.5 348.4 767.9 348.9 763.5 349.0C759.1 349.1 754.2 348.8 750.0 347.9C745.8 347.0 742.5 345.4 738.0 343.7C733.5 342.0 725.5 338.7 723.0 337.7C719.0 339.3 707.7 344.4 699.0 347.5C690.3 350.6 680.3 353.8 671.0 356.0C661.7 358.2 652.4 359.8 643.0 361.0C633.6 362.2 624.2 362.9 614.8 363.0C605.4 363.1 596.0 362.8 586.6 361.6C577.2 360.4 567.9 358.6 558.5 356.0C549.1 353.4 538.8 349.8 530.3 346.0C521.8 342.2 514.9 338.4 507.8 333.5C500.8 328.6 493.4 322.2 488.0 316.6C482.6 311.0 478.3 304.9 475.5 299.7C472.7 294.5 472.2 288.7 471.3 285.6C470.4 282.5 470.5 281.9 470.4 281.2Z"/></clipPath>
<linearGradient id="wall" gradientUnits="userSpaceOnUse" x1="470" y1="0" x2="720" y2="0">
<stop offset="0" stop-color="#c9860b"/><stop offset="0.25" stop-color="#b06e09"/><stop offset="0.55" stop-color="#9a5a08"/><stop offset="1" stop-color="#a46208"/></linearGradient>
<linearGradient id="ufin" gradientUnits="userSpaceOnUse" x1="717" y1="0" x2="776" y2="0">
<stop offset="0" stop-color="#c27c0a"/><stop offset="0.6" stop-color="#a46408"/><stop offset="1" stop-color="#965608"/></linearGradient>
<linearGradient id="lfin" gradientUnits="userSpaceOnUse" x1="749" y1="0" x2="781" y2="0">
<stop offset="0" stop-color="#b87409"/><stop offset="1" stop-color="#a06008"/></linearGradient>
<linearGradient id="cyl" gradientUnits="userSpaceOnUse" x1="512.800" y1="0" x2="547.800" y2="0">
<stop offset="0" stop-color="#b87409"/><stop offset="0.35" stop-color="#a06008"/><stop offset="0.7" stop-color="#bc780a"/><stop offset="1" stop-color="#d8920b"/></linearGradient>
</defs>
<g clip-path="url(#vp)">
<polygon points="389.300,160 390.500,160 401.500,407.200 401.500,463 395,463 389.500,285" fill="#b4720a"/>
<polygon points="390.500,160 831,160 842,402.600 401.500,407.200" fill="#ffc904"/>
<polygon points="401.500,407.200 842,402.600 842.500,463 401.500,463" fill="#99590a"/>
<path d="M831 160L842 402.600 842.500 463" fill="none" stroke="#8a6a10" stroke-width=".6"/>
<path d="M470.4 281.2C470.7 279.8 470.7 277.0 472.4 272.9C474.1 268.8 477.2 261.5 480.7 256.3C484.2 251.1 488.0 246.6 493.2 241.8C498.4 237.0 505.2 231.6 511.8 227.3C518.4 223.0 525.6 219.1 532.5 215.9C539.4 212.7 546.4 210.3 553.3 208.2C560.2 206.1 567.1 204.7 574.0 203.5C580.9 202.3 587.0 201.4 594.7 200.8C602.4 200.2 609.6 199.7 620.0 200.0C630.4 200.3 644.1 200.3 656.8 202.5C669.5 204.7 685.9 209.4 696.0 213.0C706.1 216.6 713.7 222.0 717.2 223.8C719.6 222.5 726.0 217.9 731.6 215.8C737.2 213.7 744.9 211.7 750.8 211.0C756.6 210.3 762.6 210.5 766.7 211.6C770.9 212.7 774.9 214.8 775.7 217.4C776.5 220.0 774.0 223.5 771.5 227.0C769.0 230.5 764.1 234.7 760.4 238.2C756.7 241.7 751.1 246.2 749.2 247.8C750.8 250.2 756.7 257.0 758.8 262.0C760.9 267.0 761.9 272.7 762.0 278.0C762.1 283.3 761.0 289.2 759.7 294.0C758.4 298.8 755.5 303.8 754.0 307.0C752.5 310.2 751.3 312.2 750.8 313.3C752.9 314.4 759.2 316.8 763.5 319.7C767.8 322.6 773.5 327.5 776.3 331.0C779.1 334.5 780.5 337.8 780.5 340.5C780.5 343.2 779.1 345.6 776.3 347.0C773.5 348.4 767.9 348.9 763.5 349.0C759.1 349.1 754.2 348.8 750.0 347.9C745.8 347.0 742.5 345.4 738.0 343.7C733.5 342.0 725.5 338.7 723.0 337.7C719.0 339.3 707.7 344.4 699.0 347.5C690.3 350.6 680.3 353.8 671.0 356.0C661.7 358.2 652.4 359.8 643.0 361.0C633.6 362.2 624.2 362.9 614.8 363.0C605.4 363.1 596.0 362.8 586.6 361.6C577.2 360.4 567.9 358.6 558.5 356.0C549.1 353.4 538.8 349.8 530.3 346.0C521.8 342.2 514.9 338.4 507.8 333.5C500.8 328.6 493.4 322.2 488.0 316.6C482.6 311.0 478.3 304.9 475.5 299.7C472.7 294.5 472.2 288.7 471.3 285.6C470.4 282.5 470.5 281.9 470.4 281.2Z" fill="url(#wall)"/>
<g clip-path="url(#oc)">
<rect x="717.200" y="200" width="70" height="62" fill="url(#ufin)"/>
<rect x="749" y="247.800" width="40" height="110" fill="url(#lfin)"/>
</g>
<path d="M470.4 281.2C470.7 279.8 470.7 277.0 472.4 272.9C474.1 268.8 477.2 261.5 480.7 256.3C484.2 251.1 488.0 246.6 493.2 241.8C498.4 237.0 505.2 231.6 511.8 227.3C518.4 223.0 525.6 219.1 532.5 215.9C539.4 212.7 546.4 210.3 553.3 208.2C560.2 206.1 567.1 204.7 574.0 203.5C580.9 202.3 587.0 201.4 594.7 200.8C602.4 200.2 609.6 199.7 620.0 200.0C630.4 200.3 644.1 200.3 656.8 202.5C669.5 204.7 685.9 209.4 696.0 213.0C706.1 216.6 713.7 222.0 717.2 223.8C719.6 222.5 726.0 217.9 731.6 215.8C737.2 213.7 744.9 211.7 750.8 211.0C756.6 210.3 762.6 210.5 766.7 211.6C770.9 212.7 774.9 214.8 775.7 217.4C776.5 220.0 774.0 223.5 771.5 227.0C769.0 230.5 764.1 234.7 760.4 238.2C756.7 241.7 751.1 246.2 749.2 247.8C750.8 250.2 756.7 257.0 758.8 262.0C760.9 267.0 761.9 272.7 762.0 278.0C762.1 283.3 761.0 289.2 759.7 294.0C758.4 298.8 755.5 303.8 754.0 307.0C752.5 310.2 751.3 312.2 750.8 313.3C752.9 314.4 759.2 316.8 763.5 319.7C767.8 322.6 773.5 327.5 776.3 331.0C779.1 334.5 780.5 337.8 780.5 340.5C780.5 343.2 779.1 345.6 776.3 347.0C773.5 348.4 767.9 348.9 763.5 349.0C759.1 349.1 754.2 348.8 750.0 347.9C745.8 347.0 742.5 345.4 738.0 343.7C733.5 342.0 725.5 338.7 723.0 337.7C719.0 339.3 707.7 344.4 699.0 347.5C690.3 350.6 680.3 353.8 671.0 356.0C661.7 358.2 652.4 359.8 643.0 361.0C633.6 362.2 624.2 362.9 614.8 363.0C605.4 363.1 596.0 362.8 586.6 361.6C577.2 360.4 567.9 358.6 558.5 356.0C549.1 353.4 538.8 349.8 530.3 346.0C521.8 342.2 514.9 338.4 507.8 333.5C500.8 328.6 493.4 322.2 488.0 316.6C482.6 311.0 478.3 304.9 475.5 299.7C472.7 294.5 472.2 288.7 471.3 285.6C470.4 282.5 470.5 281.9 470.4 281.2Z" fill="none" stroke="#4a3005" stroke-width="0.600"/>
<path d="M475.5 298.8C476.7 297.2 478.5 294.2 482.8 289.5C487.1 284.8 494.9 276.3 501.5 270.8C508.1 265.3 515.3 260.3 522.2 256.3C529.1 252.3 536.0 249.4 542.9 247.0C549.8 244.6 556.7 243.2 563.6 241.8C570.5 240.4 577.5 239.6 584.4 238.7C591.3 237.8 599.1 237.0 605.0 236.6C610.9 236.2 611.4 235.7 620.0 236.0C628.6 236.3 644.1 236.3 656.8 238.5C669.5 240.7 685.9 245.4 696.0 249.0C706.1 252.6 713.7 258.0 717.2 259.8C719.6 258.5 726.3 253.8 731.6 251.8C736.9 249.8 746.3 248.5 749.2 247.8L749.2 283.8C749.9 285.3 752.0 290.2 753.5 293.0C755.0 295.8 757.5 299.2 758.3 300.5C757.6 301.6 755.2 304.9 754.0 307.0C752.8 309.1 751.3 312.2 750.8 313.3L750 347.9C748.0 347.2 742.5 345.4 738.0 343.7C733.5 342.0 725.5 338.7 723.0 337.7C719.0 339.3 707.7 344.4 699.0 347.5C690.3 350.6 680.3 353.8 671.0 356.0C661.7 358.2 652.4 359.8 643.0 361.0C633.6 362.2 624.2 362.9 614.8 363.0C605.4 363.1 596.0 362.8 586.6 361.6C577.2 360.4 567.9 358.6 558.5 356.0C549.1 353.4 538.8 349.8 530.3 346.0C521.8 342.2 514.9 338.4 507.8 333.5C500.8 328.6 493.4 322.4 488.0 316.6C482.6 310.8 477.6 301.8 475.5 298.8Z" fill="#ffc904" stroke="#5a4005" stroke-width="0.500"/>
<path d="M717.200 223.800V259.800" stroke="#4a3005" stroke-width=".6"/>
<!-- boss cylinder -->
<path d="M512.800 282.500V320.500A17.500 19.200 0 0 0 547.800 320.500V282.500z" fill="url(#cyl)" stroke="#4a3005" stroke-width=".5"/>
<ellipse cx="530.300" cy="282.500" rx="17.500" ry="19.200" fill="#ffc904" stroke="#4a3005" stroke-width=".6"/>
<!-- WCS axes -->
<path d="M616.400 281.100V230" stroke="#2a2a60" stroke-width="1.300"/>
<path d="M616.400 219.500l-2.400 12h4.800z" fill="#2a3ab8"/>
<path d="M616.400 281.100L680 280.400" stroke="#3a6a18" stroke-width="1.200"/>
<path d="M690.500 280.300l-12-2.200v4.400z" fill="#58a828"/>
<path d="M616.400 281.100L617.600 314" stroke="#d84818" stroke-width="1.300"/>
<path d="M617.900 322l-2.300-9.500h4.400z" fill="#e04828"/>
<text x="602" y="218" font-family="Liberation Sans,sans-serif" font-size="8.600" fill="#3a48c0">ZM</text>
<text x="679" y="277.500" font-family="Liberation Sans,sans-serif" font-size="8.600" fill="#7ab038">YM</text>
<text x="603.500" y="332" font-family="Liberation Sans,sans-serif" font-size="8.600" fill="#d85020">XM</text>
<!-- tool marker + MCS box -->
<g stroke="#fff0c8" stroke-opacity=".75" fill="none" stroke-width="1.100">
<path d="M615 357V463"/>
<path d="M617 386H664.500L665.500 453.500H617"/>
<path d="M617 390H663"/>
<path d="M617 427.500H701"/>
</g>
<circle cx="615" cy="340.500" r="1.500" fill="#ffe8a0"/>
<path d="M615 344l1.800 8-1.800 5-1.800-5z" fill="#8c8a68"/>
<path d="M712.500 427.500l-12-3v6z" fill="#f4ead8"/>
<text x="715" y="431" font-family="Liberation Sans,sans-serif" font-size="9" fill="#e8dcc0">Y</text>
</g>
</svg>
<div id="bottom" class="abs">
<div class="abs grip" style="left:2px;top:3px;height:46px"></div>
<div class="abs" style="left:107.500px;top:0;width:51.500px;height:51px;background:#c6d6d6"></div><svg class="abs" style="left:22px;top:5px" width="20" height="17" viewBox="0 0 20 17"><g fill="#dfe8fc" stroke="#4a5ab0" stroke-width=".8"><rect x="1" y="1" width="6" height="8" rx="1"/><rect x="4" y="3" width="6" height="8" rx="1"/><rect x="7" y="5" width="6" height="8" rx="1"/></g><g stroke="#2a3a98" fill="#fff" stroke-width=".8"><path d="M13 9v5h3" fill="none"/><rect x="14.5" y="8" width="3" height="3"/><rect x="15.5" y="12.5" width="3" height="3"/></g></svg>
<svg class="abs" style="left:72.5px;top:5px" width="18" height="17" viewBox="0 0 18 17"><path d="M6 1h4l1 8H5z" fill="#c89888" stroke="#7a5a58" stroke-width=".6"/><rect x="1" y="8" width="4" height="6" fill="#dfe8fc" stroke="#4a5ab0" stroke-width=".8"/><path d="M2 10l2 2M4 10l-2 2" stroke="#4a5ab0" stroke-width=".6"/><g stroke="#2a3a98" fill="#fff" stroke-width=".8"><path d="M11 9v5h3" fill="none"/><rect x="12.5" y="8" width="3" height="3"/><rect x="13.5" y="12.5" width="3" height="3"/></g></svg>
<svg class="abs" style="left:125px;top:5px" width="19" height="17" viewBox="0 0 19 17"><path d="M1 6l8-2 4 2" fill="none" stroke="#2a3a98" stroke-width="1.400"/><path d="M3 5l3 0" stroke="#8a9ad8" stroke-width="1"/><g stroke="#2a3a98" fill="#fff" stroke-width=".8"><path d="M12 9v5h3" fill="none"/><rect x="13.5" y="8" width="3" height="3"/><rect x="14.5" y="12.5" width="3" height="3"/></g></svg>
<svg class="abs" style="left:174px;top:5px" width="20" height="17" viewBox="0 0 20 17"><rect x="1" y="5" width="9" height="2.500" fill="#dfe8fc" stroke="#4a5ab0" stroke-width=".8"/><g stroke="#2a3a98" fill="#fff" stroke-width=".8"><path d="M13 9v5h3" fill="none"/><rect x="14.5" y="8" width="3" height="3"/><rect x="15.5" y="12.5" width="3" height="3"/></g></svg>
<div class="t" style="left:30.3px;top:27px;width:80px;margin-left:-40px;text-align:center;font-size:8.500px;color:#333">程序顺序视</div>
<div class="t" style="left:30.3px;top:38.5px;width:80px;margin-left:-40px;text-align:center;font-size:8.500px;color:#333">图</div>
<div class="t" style="left:81px;top:27px;width:80px;margin-left:-40px;text-align:center;font-size:8.500px;color:#333">机床视图</div>
<div class="t" style="left:133px;top:27px;width:80px;margin-left:-40px;text-align:center;font-size:8.500px;color:#333">几何视图</div>
<div class="t" style="left:184.2px;top:27px;width:80px;margin-left:-40px;text-align:center;font-size:8.500px;color:#333">加工方法视</div>
<div class="t" style="left:184.2px;top:38.5px;width:80px;margin-left:-40px;text-align:center;font-size:8.500px;color:#333">图</div>
<svg class="abs" style="left:211.5px;top:43px" width="5" height="3" viewBox="0 0 5 3"><path d="M0 0h5L2.5 3z" fill="#222"/></svg>
<div class="abs grip" style="left:222px;top:3px;height:46px"></div>
</div>
<div id="status" class="abs">
<div class="t" style="left:1.5px;top:3px;font-size:8.100px;color:#111;font-weight:500">选择类型、子类型、位置，并指定工序名称</div>
</div>
<div id="dialog" class="abs">
<div class="abs" style="left:-1px;top:0px;width:240px;height:17px;background:#5b8a87"></div>
<svg class="abs" style="left:4px;top:3px" width="11" height="11" viewBox="0 0 11 11"><circle cx="5.500" cy="5.500" r="2.600" fill="none" stroke="#fff" stroke-width="2"/><g stroke="#fff" stroke-width="1.700"><path d="M5.500 .3v2M5.500 8.700v2M.3 5.500h2M8.700 5.500h2M1.800 1.800l1.400 1.400M7.800 7.800l1.400 1.400M1.800 9.200l1.400-1.400M7.800 3.200l1.400-1.400"/></g></svg>
<div class="t" style="left:23px;top:3.5px;font-size:9.600px;color:#fff">创建工序</div>
<svg class="abs" style="left:224px;top:4.5px" width="9" height="9" viewBox="0 0 9 9"><path d="M1 1l7 7M8 1L1 8" stroke="#fff" stroke-width="1.700"/></svg>
<div class="abs" style="left:1.5px;top:18px;width:234.2px;height:48px;background:#fff"></div>
<div class="t" style="left:8.5px;top:24.5px;font-size:9.600px;color:#3a8ac8">类型</div>
<svg class="abs" style="left:222px;top:26px" width="10" height="7" viewBox="0 0 10 7"><path d="M1 5.500L5 1.500l4 4" fill="none" stroke="#3a8ab8" stroke-width="1.300"/></svg>
<div class="abs" style="left:1.5px;top:68px;width:234.2px;height:105px;background:#fff"></div>
<div class="t" style="left:8.5px;top:73.5px;font-size:9.600px;color:#3a8ac8">工序子类型</div>
<svg class="abs" style="left:222px;top:75px" width="10" height="7" viewBox="0 0 10 7"><path d="M1 5.500L5 1.500l4 4" fill="none" stroke="#3a8ab8" stroke-width="1.300"/></svg>
<div class="abs" style="left:1.5px;top:175px;width:234.2px;height:107px;background:#fff"></div>
<div class="t" style="left:8.5px;top:181px;font-size:9.600px;color:#3a8ac8">位置</div>
<svg class="abs" style="left:222px;top:182.5px" width="10" height="7" viewBox="0 0 10 7"><path d="M1 5.500L5 1.500l4 4" fill="none" stroke="#3a8ab8" stroke-width="1.300"/></svg>
<div class="abs" style="left:1.5px;top:284px;width:234.2px;height:46.5px;background:#fff"></div>
<div class="t" style="left:8.5px;top:289px;font-size:9.600px;color:#3a8ac8">名称</div>
<svg class="abs" style="left:222px;top:290.5px" width="10" height="7" viewBox="0 0 10 7"><path d="M1 5.500L5 1.500l4 4" fill="none" stroke="#3a8ab8" stroke-width="1.300"/></svg>
<div class="abs" style="left:10.5px;top:42.5px;width:218px;height:17px;background:#fff;border:1px solid #bfc3c7"></div>
<div class="t" style="left:14px;top:46.5px;font-size:9.400px;color:#111">mill_planar</div>
<svg class="abs" style="left:218.5px;top:50px" width="5" height="3" viewBox="0 0 5 3"><path d="M0 0h5L2.5 3z" fill="#222"/></svg>
<div class="abs" style="left:45.5px;top:118.3px;width:23.2px;height:22.7px;background:#b4bfc8;border:1px solid #98a4b0"></div>
<svg class="abs" style="left:48px;top:97.5px" width="17" height="17" viewBox="0 0 17 17"><rect x=".800" y="2.500" width="11.200" height="13" fill="#fff" stroke="#555" stroke-width=".7"/><path d="M3.500 3v8h7" fill="none" stroke="#1a1a3a" stroke-width="1.600"/><rect x="10" y="1.200" width="4.500" height="10.500" fill="#1a1a3a"/><path d="M12.300 1.200v10" stroke="#8a8ab8" stroke-width=".8"/></svg>
<svg class="abs" style="left:73px;top:97.5px" width="17" height="17" viewBox="0 0 17 17"><rect x="1" y="1.500" width="13" height="13" fill="#fff" stroke="#555" stroke-width=".7"/><rect x="2" y="3" width="7" height="8" fill="#e060a8"/><path d="M2 11h8V3" fill="none" stroke="#1a1a3a" stroke-width="1.600"/><path d="M11 0v10M13.500 0v10M9 5h6M9 8h6" stroke="#3a3a98" stroke-width="1"/></svg>
<svg class="abs" style="left:98.5px;top:97.5px" width="17" height="17" viewBox="0 0 17 17"><path d="M1 6l5-2 9 3v5l-5 3-9-4z" fill="#5a6ac8"/><path d="M1 6l5-2 9 3-5 2z" fill="#a8b4f0"/><path d="M10 9v6l5-3V7z" fill="#2a3a88"/><path d="M9 0h3v8H9z" fill="#3a4ab0" stroke="#1a1a4a" stroke-width=".5"/><path d="M3 11v3M6 12v3" stroke="#fff" stroke-width="1.200"/></svg>
<svg class="abs" style="left:123.5px;top:97.5px" width="17" height="17" viewBox="0 0 17 17"><path d="M1 7l6-5 8 2v8l-5 3-9-3z" fill="#6a7ac8"/><path d="M1 7l6-5 8 2-5 4z" fill="#b8c0d8"/><path d="M10 8v7l5-3V4z" fill="#3a3a5a"/><path d="M11 1h3v8h-3z" fill="#4a4a6a" stroke="#1a1a2a" stroke-width=".5"/><path d="M3 10v3M6 11v3" stroke="#fff" stroke-width="1.200"/></svg>
<svg class="abs" style="left:148.5px;top:97.5px" width="17" height="17" viewBox="0 0 17 17"><path d="M1 1v14h14" fill="none" stroke="#444" stroke-width=".8"/><path d="M3 3v4h4v4h4v3" fill="none" stroke="#1a1a3a" stroke-width="1.300"/><path d="M9 0v8M12 0v8M7 4h8M7 9h8" stroke="#3a3a78" stroke-width="1"/></svg>
<svg class="abs" style="left:173px;top:97.5px" width="18" height="17" viewBox="0 0 18 17"><path d="M1 5v10h11" fill="none" stroke="#444" stroke-width=".8"/><path d="M3 7v6h7" fill="none" stroke="#1a1a3a" stroke-width="1.300"/><path d="M5 6v6M7 8v4" stroke="#3a3a98" stroke-width="1.200"/><rect x="9" y=".7" width="8" height="8" fill="#eef2ff" stroke="#5a6ad8" stroke-width="1.200"/></svg>
<svg class="abs" style="left:47.5px;top:121px" width="18" height="18" viewBox="0 0 18 18"><rect x="2" y="2" width="14" height="15" fill="#cdd8ea"/><ellipse cx="7.500" cy="12" rx="4" ry="5" fill="#bcdcc4"/><path d="M5.500 1.800C10 1.500 13.500 1.500 15.500 5.500 16.800 8.500 16.500 10.500 16.800 12.800" fill="none" stroke="#1a2a78" stroke-width="1.700"/><path d="M1.500 9C2.500 5.500 4.500 3.800 7 3.800 10.500 3.800 12.500 6 12.300 9.500 12.200 12.500 11.500 14 10.800 16.500" fill="none" stroke="#1a2a78" stroke-width="1.700"/></svg>
<svg class="abs" style="left:73px;top:121.5px" width="17" height="17" viewBox="0 0 17 17"><path d="M4.500 1h7L15 4.500v8L11.500 16h-7L1 12.500v-8z" fill="#6aa8a8" stroke="#2a4a4a" stroke-width=".8"/><path d="M4 16a2.200 2.200 0 0 1 4 0zM8 16a2.200 2.200 0 0 1 4 0z" fill="#fff"/><path d="M7 2v11" stroke="#d8f0f0" stroke-width="1.400"/><rect x="8.800" y="1.500" width="3.200" height="12" fill="#1a2a68"/><path d="M12.800 3v9" stroke="#e8f0f8" stroke-width=".9"/></svg>
<svg class="abs" style="left:98.5px;top:121.5px" width="17" height="17" viewBox="0 0 17 17"><path d="M4.500 1h7L15 4.500v8L11.500 16h-7L1 12.500v-8z" fill="#e4eef2" stroke="#3a5a5a" stroke-width=".8"/><path d="M1.500 11l3-2.500 3.500 2.500v4.500H4.500L1.500 12.500z" fill="#6aa8a0"/><rect x="8.500" y="1.500" width="3.400" height="12" fill="#1a2a68"/><path d="M12.700 3v10" stroke="#8aa0b0" stroke-width=".9"/></svg>
<svg class="abs" style="left:123.5px;top:121.5px" width="17" height="17" viewBox="0 0 17 17"><path d="M1.500 1.500v14.500h6.500v-4.500h-3.500" fill="none" stroke="#444" stroke-width=".8"/><path d="M4.500 11.500v-4.500h2.500v-2h9.500v4h-9v2.500z" fill="#26262e"/><path d="M8.500 0v6M11.500 0v6" stroke="#26262e" stroke-width="1.300"/><path d="M7 7.700h7" stroke="#ddd" stroke-width=".8" stroke-dasharray="1.200 1.200"/></svg>
<svg class="abs" style="left:148.5px;top:121.5px" width="17" height="17" viewBox="0 0 17 17"><rect x="2" y="6.500" width="13" height="6" fill="#5a88ea"/><path d="M3 8h11M3 10.500h11" stroke="#dfe8ff" stroke-width=".9" stroke-dasharray="1.500 1.300"/><path d="M5.500 12.500v3.500M11.500 12.500v3.500" stroke="#3a68d0" stroke-width="1.300"/><path d="M0.500 5l2 1.500M16.500 5l-2 1.500" stroke="#3a68d0" stroke-width="1"/><rect x="8.500" y="0" width="5" height="5.500" fill="#30304a"/><rect x="10" y="1.500" width="2" height="2.500" fill="#c8c8e0"/></svg>
<svg class="abs" style="left:173px;top:121.5px" width="17" height="17" viewBox="0 0 17 17"><path d="M2.500 9h3.500v7" fill="none" stroke="#333" stroke-width="1.100"/><path d="M13 9h3.500M14.500 9v6" fill="none" stroke="#444" stroke-width="1"/><path d="M10 1v8" stroke="#26264a" stroke-width="1.600"/><path d="M12.500 4v6" stroke="#26264a" stroke-width="1.300"/></svg>
<svg class="abs" style="left:48px;top:147px" width="17" height="17" viewBox="0 0 17 17"><path d="M4 3h2.500v8H4z" fill="#3a4a98"/><path d="M5.200 11v3" stroke="#222" stroke-width="1"/><rect x="1" y="13.500" width="9" height="2" fill="#d8d8d8" stroke="#444" stroke-width=".6"/><text x="8.500" y="8" font-family="Liberation Serif,serif" font-weight="bold" font-size="9" fill="#1a2ab0">A</text></svg>
<svg class="abs" style="left:73px;top:147px" width="17" height="17" viewBox="0 0 17 17"><rect x="1" y="2" width="14" height="12" fill="#d8d8d0" stroke="#555" stroke-width=".7"/><rect x="2.500" y="3.500" width="7.500" height="6" fill="#2a8a48"/><path d="M11.500 4h2.500M11.500 6h2.500M11.500 8h2.500" stroke="#777" stroke-width="1"/><rect x="2.500" y="11" width="11" height="2" fill="#aaa"/><circle cx="12.500" cy="11" r="1" fill="#d03828"/></svg>
<svg class="abs" style="left:98.5px;top:147px" width="17" height="17" viewBox="0 0 17 17"><path d="M3 15V7c0-3 2-4 5-4h6v4H9c-1 0-2 0-2 2v6z" fill="#7a9ad0" stroke="#2a3a68" stroke-width=".7"/><path d="M11 3l3-1.500v4L11 7z" fill="#3a3a4a"/><path d="M4 8c2-3 4-3 6-3" fill="none" stroke="#e8f0ff" stroke-width="1.200"/></svg>
<div class="t" style="left:10.5px;top:202px;font-size:8.800px;color:#111">程序</div>
<div class="abs" style="left:125.5px;top:199px;width:103px;height:17px;background:#fff;border:1px solid #bfc3c7"></div>
<div class="t" style="left:129px;top:202.5px;font-size:8.800px;color:#111">NC_PROGRAM</div>
<svg class="abs" style="left:218.5px;top:206.5px" width="5" height="3" viewBox="0 0 5 3"><path d="M0 0h5L2.5 3z" fill="#222"/></svg>
<div class="t" style="left:10.5px;top:222px;font-size:8.800px;color:#111">刀具</div>
<div class="abs" style="left:125.5px;top:218.5px;width:103px;height:17px;background:#fff;border:1px solid #bfc3c7"></div>
<div class="t" style="left:129px;top:222px;font-size:8.800px;color:#111">D6 (铣刀-5 参数)</div>
<svg class="abs" style="left:218.5px;top:226px" width="5" height="3" viewBox="0 0 5 3"><path d="M0 0h5L2.5 3z" fill="#222"/></svg>
<div class="t" style="left:10.5px;top:241.5px;font-size:8.800px;color:#111">几何体</div>
<div class="abs" style="left:125.5px;top:238px;width:103px;height:17px;background:#fff;border:1px solid #bfc3c7"></div>
<div class="t" style="left:129px;top:241.5px;font-size:8.800px;color:#111">WORKPIECE_1</div>
<svg class="abs" style="left:218.5px;top:245.5px" width="5" height="3" viewBox="0 0 5 3"><path d="M0 0h5L2.5 3z" fill="#222"/></svg>
<div class="t" style="left:10.5px;top:261.5px;font-size:8.800px;color:#111">方法</div>
<div class="abs" style="left:125.5px;top:258px;width:103px;height:17px;background:#fff;border:1px solid #bfc3c7"></div>
<div class="t" style="left:129px;top:261.5px;font-size:8.800px;color:#111">METHOD</div>
<svg class="abs" style="left:218.5px;top:265.5px" width="5" height="3" viewBox="0 0 5 3"><path d="M0 0h5L2.5 3z" fill="#222"/></svg>
<div class="abs" style="left:119.5px;top:192px;width:114px;height:95.5px;border:1px solid #e4685e"></div>
<div class="abs" style="left:10.5px;top:306.5px;width:218px;height:17px;background:#fff;border:1px solid #bfc3c7"></div>
<div class="t" style="left:14px;top:310px;font-size:8.800px;color:#111">CLEANUP_CORNERS</div>
<div class="abs" style="left:102px;top:338px;width:39.5px;height:18.5px;background:#a9d5f3;border:1px solid #4a9edc"></div>
<div class="abs" style="left:145px;top:338px;width:39.5px;height:18.5px;background:#d8d8d8;border:1px solid #b4b4b4"></div>
<div class="abs" style="left:188px;top:338px;width:39.5px;height:18.5px;background:#d8d8d8;border:1px solid #b4b4b4"></div>
<div class="t" style="left:121.7px;top:342px;width:40px;margin-left:-20px;text-align:center;font-size:8.800px;color:#111">确定</div>
<div class="t" style="left:164.7px;top:342px;width:40px;margin-left:-20px;text-align:center;font-size:8.800px;color:#111">应用</div>
<div class="t" style="left:207.7px;top:342px;width:40px;margin-left:-20px;text-align:center;font-size:8.800px;color:#111">取消</div>
</div>
<svg class="abs" style="left:0px;top:0px;pointer-events:none" width="995" height="531" viewBox="0 0 995 531"><path d="M90 302.500L125.500 258.500 123 255.500 135 251.500 132.500 263.500 129.500 261.500 91.500 303.500z" fill="#e03434"/></svg>
<svg class="abs" style="left:780px;top:465px;pointer-events:none" width="215" height="66" viewBox="780 465 215 66">
<defs><linearGradient id="lg" x1="0" y1="0" x2="1" y2="0"><stop offset="0" stop-color="#fff" stop-opacity="0"/><stop offset=".12" stop-color="#fff" stop-opacity=".92"/><stop offset="1" stop-color="#fff" stop-opacity=".92"/></linearGradient></defs>
<g fill="#fff" stroke="#555" stroke-width=".7">
<path d="M797 473c-6.500 0-11 4-11 9 0 3 1.600 5.500 4 7l-1 3.500 4-2c1.200.4 2.600.6 4 .6 6.500 0 11-4 11-9s-4.500-9.100-11-9.100z"/>
<path d="M814 481c-6.500 0-11.500 4.200-11.500 9.500s5 9.500 11.500 9.500c1.400 0 2.700-.2 4-.6l4 2.200-1-3.600c2.700-1.800 4.500-4.500 4.500-7.500 0-5.300-5-9.500-11.500-9.500z"/>
</g>
<g fill="#555"><circle cx="793" cy="479" r=".9"/><circle cx="800" cy="479" r=".9"/><circle cx="810" cy="487" r=".9"/><circle cx="818" cy="487" r=".9"/></g>
<text x="836" y="494" font-family="Liberation Sans,Noto Sans CJK SC,sans-serif" font-size="22" fill="#fff" stroke="#555" stroke-width=".7" textLength="27" lengthAdjust="spacingAndGlyphs">UG</text>
<text x="868" y="494" font-family="Liberation Sans,Noto Sans CJK SC,sans-serif" font-size="23.200" fill="#fff" stroke="#555" stroke-width=".7">数控编程</text>
<rect x="858" y="487" width="137" height="42" fill="url(#lg)"/>
<ellipse cx="891" cy="505.500" rx="27" ry="13" transform="rotate(-18 891 505.500)" fill="none" stroke="#f0a030" stroke-width="4"/>
<path d="M866 512a27 13 -18 0 0 40 4" fill="none" stroke="#3a6ab8" stroke-width="3.500"/>
<text x="880" y="517" font-family="Liberation Serif,serif" font-style="italic" font-weight="bold" font-size="26" fill="#5a9ad8" stroke="#fff" stroke-width=".5">XS</text>
<text x="919" y="510" font-family="Liberation Sans,Noto Sans CJK SC,sans-serif" font-weight="900" font-size="22.500" fill="#5a6a9c">资料网</text>
<text x="918" y="521" font-family="Liberation Mono,monospace" font-weight="bold" font-size="8.700" fill="#555" textLength="68" lengthAdjust="spacingAndGlyphs">ZL.XS1616.COM</text>
<path d="M953 527h6M954 527v-3h4v3M955 524v-1.500h2v1.500" stroke="#888" fill="none" stroke-width=".7"/>
</svg>

</body></html>
